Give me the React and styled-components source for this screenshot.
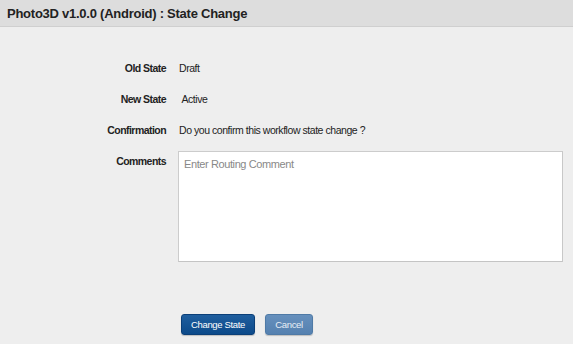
import styled, { createGlobalStyle } from "styled-components";

const GlobalStyle = createGlobalStyle`
  html, body {
    margin: 0;
    padding: 0;
    background: #eeeeee;
    font-family: "Liberation Sans", Arial, sans-serif;
  }
`;

const Page = styled.div`
  width: 573px;
  height: 344px;
  background: #eeeeee;
  overflow: hidden;
`;

const Header = styled.div`
  height: 27px;
  box-sizing: border-box;
  background: #dddddd;
  border-bottom: 1px solid #cfcfcf;
  padding: 6px 0 0 7px;
  font-size: 13px;
  letter-spacing: -0.25px;
  font-weight: bold;
  color: #222;
`;

const Form = styled.div`
  display: grid;
  grid-template-columns: 166px 385px;
  column-gap: 12px;
  padding-top: 35px;
`;

const Label = styled.div`
  text-align: right;
  font-size: 10.5px;
  letter-spacing: -0.55px;
  font-weight: bold;
  color: #222;
  height: 31px;
`;

const Value = styled.div`
  font-size: 10.5px;
  letter-spacing: -0.45px;
  color: #222;
  height: 31px;
  padding-left: 1px;
`;

const Comment = styled.textarea`
  width: 385px;
  height: 111px;
  box-sizing: border-box;
  margin-top: -4px;
  border: 1px solid #cccccc;
  border-right-color: #c8c8c8;
  border-bottom-color: #c4c4c4;
  background: #fff;
  resize: none;
  padding: 6px 5px;
  font-family: "Liberation Sans", Arial, sans-serif;
  font-size: 11px;
  letter-spacing: -0.4px;
  color: #333;
  outline: none;
  &::placeholder {
    color: #888;
  }
`;

const Actions = styled.div`
  display: flex;
  gap: 10px;
  padding: 52px 0 0 181px;
`;

const Button = styled.button`
  width: ${(p) => (p.$primary ? 74 : 48)}px;
  height: 21px;
  padding: 0;
  border-radius: 3px;
  border: 1px solid ${(p) => (p.$primary ? "#0b3f78" : "#4f7aa6")};
  background: ${(p) =>
    p.$primary
      ? "linear-gradient(#1f5e9e, #0c4a8a)"
      : "linear-gradient(#6690bd, #5581b0)"};
  color: ${(p) => (p.$primary ? "#ffffff" : "#e8eef5")};
  font-family: "Liberation Sans", Arial, sans-serif;
  font-size: 9.5px;
  letter-spacing: -0.35px;
  box-shadow: 0 1px 1px rgba(0, 0, 0, 0.2);
  cursor: pointer;
`;

export default function App() {
  return (
    <Page>
      <GlobalStyle />
      <Header>Photo3D v1.0.0 (Android) : State Change</Header>
      <Form>
        <Label>Old State</Label>
        <Value>Draft</Value>
        <Label>New State</Label>
        <Value>&nbsp;Active</Value>
        <Label>Confirmation</Label>
        <Value>Do you confirm this workflow state change ?</Value>
        <Label>Comments</Label>
        <Comment placeholder="Enter Routing Comment" />
      </Form>
      <Actions>
        <Button $primary>Change State</Button>
        <Button>Cancel</Button>
      </Actions>
    </Page>
  );
}
